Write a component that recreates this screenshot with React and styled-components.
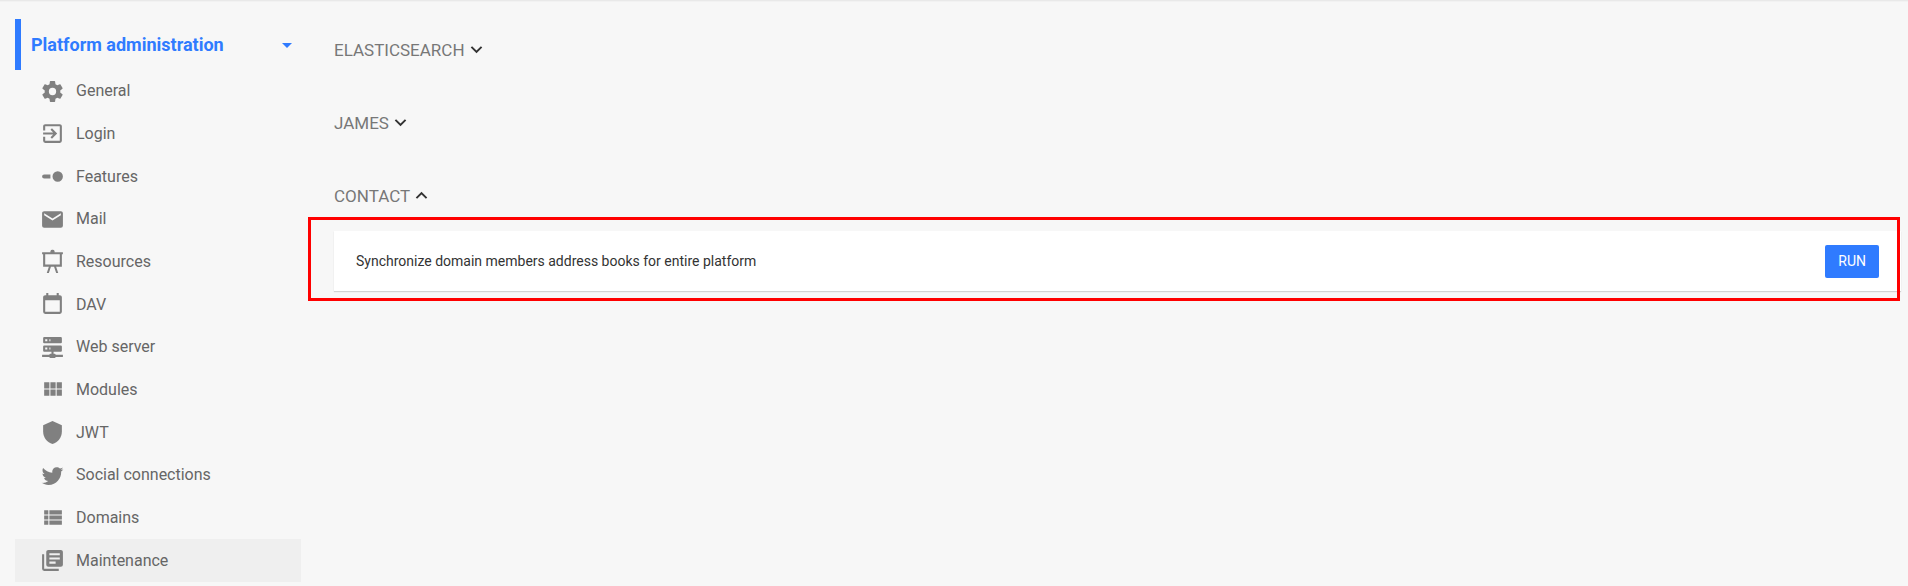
import React, { useState } from "react";
import styled, { createGlobalStyle } from "styled-components";

const GlobalStyle = createGlobalStyle`
  *, *::before, *::after { box-sizing: border-box; }
  body {
    margin: 0;
    background: #f7f7f7;
    color: #333333;
    font-family: Roboto, "Liberation Sans", sans-serif;
    font-size: 16px;
  }
`;

const Page = styled.div`
  display: flex;
  align-items: flex-start;
  border-top: 1px solid #e9e9e9;
  box-shadow: inset 0 1px 0 #f2f2f2;
`;

const Sidebar = styled.nav`
  flex: 0 0 286px;
  margin: 18px 0 0 15px;
`;

const SidebarHeader = styled.button`
  display: flex;
  align-items: center;
  justify-content: space-between;
  width: 100%;
  height: 51px;
  padding: 0 2px 0 10px;
  border: 0;
  border-left: 6px solid #2f7bff;
  background: transparent;
  color: #2f7bff;
  font: inherit;
  font-size: 18px;
  font-weight: 700;
  text-align: left;
  cursor: pointer;
`;

const Menu = styled.ul`
  display: grid;
  grid-auto-rows: 1fr;
  min-height: 512px;
  margin: 0;
  padding: 0;
  list-style: none;
`;

const MenuItem = styled.li`
  display: flex;
`;

const MenuLink = styled.a`
  flex: 1;
  display: flex;
  align-items: center;
  gap: 11px;
  padding-left: 25px;
  background: ${(p) => (p.$active ? "#efefef" : "transparent")};
  color: #666666;
  line-height: 20px;
  text-decoration: none;
`;

const Glyph = styled.svg`
  flex: none;
  width: ${(p) => p.$size}px;
  height: ${(p) => p.$size}px;
  fill: currentColor;
`;

const MenuGlyph = styled(Glyph)`
  color: #808080;
`;

const Main = styled.main`
  flex: 1;
  min-width: 0;
  display: flex;
  flex-direction: column;
  gap: 50px;
  padding: 37px 7px 0 33px;
`;

const SectionTitle = styled.h2`
  margin: 0;
  font-size: 17px;
  font-weight: 400;
`;

const SectionToggle = styled.button`
  display: flex;
  align-items: center;
  padding: 0;
  border: 0;
  background: transparent;
  color: #777777;
  font: inherit;
  line-height: 22px;
  text-transform: uppercase;
  cursor: pointer;
`;

const Chevron = styled(Glyph)`
  color: #333333;
`;

const SectionBody = styled.div`
  position: relative;
  margin-top: 24px;
`;

const Highlight = styled.div`
  position: absolute;
  inset: -14px 1px -10px -26px;
  border: 3px solid #ff0000;
  pointer-events: none;
`;

const Card = styled.div`
  display: flex;
  align-items: center;
  justify-content: space-between;
  min-height: 60px;
  padding: 0 22px;
  background: #ffffff;
  box-shadow: 0 1px 1px rgba(0, 0, 0, 0.15);
  font-size: 14px;
`;

const RunButton = styled.button`
  height: 33px;
  padding: 0 13px;
  border: 0;
  border-radius: 2px;
  background: #2f7bff;
  color: #ffffff;
  font: inherit;
  cursor: pointer;
`;

const icons = {
  cog: "M12,15.5A3.5,3.5 0 0,1 8.5,12A3.5,3.5 0 0,1 12,8.5A3.5,3.5 0 0,1 15.5,12A3.5,3.5 0 0,1 12,15.5M19.43,12.97C19.47,12.65 19.5,12.33 19.5,12C19.5,11.67 19.47,11.34 19.43,11L21.54,9.37C21.73,9.22 21.78,8.95 21.66,8.73L19.66,5.27C19.54,5.05 19.27,4.96 19.05,5.05L16.56,6.05C16.04,5.66 15.5,5.32 14.87,5.07L14.5,2.42C14.46,2.18 14.25,2 14,2H10C9.75,2 9.54,2.18 9.5,2.42L9.13,5.07C8.5,5.32 7.96,5.66 7.44,6.05L4.95,5.05C4.73,4.96 4.46,5.05 4.34,5.27L2.34,8.73C2.21,8.95 2.27,9.22 2.46,9.37L4.57,11C4.53,11.34 4.5,11.67 4.5,12C4.5,12.33 4.53,12.65 4.57,12.97L2.46,14.63C2.27,14.78 2.21,15.05 2.34,15.27L4.34,18.73C4.46,18.95 4.73,19.03 4.95,18.95L7.44,17.94C7.96,18.34 8.5,18.68 9.13,18.93L9.5,21.58C9.54,21.82 9.75,22 10,22H14C14.25,22 14.46,21.82 14.5,21.58L14.87,18.93C15.5,18.67 16.04,18.34 16.56,17.94L19.05,18.95C19.27,19.03 19.54,18.95 19.66,18.73L21.66,15.27C21.78,15.05 21.73,14.78 21.54,14.63L19.43,12.97Z",
  enter: "M19,3H5C3.89,3 3,3.89 3,5V9H5V5H19V19H5V15H3V19A2,2 0 0,0 5,21H19A2,2 0 0,0 21,19V5C21,3.89 20.1,3 19,3M10.08,15.58L11.5,17L16.5,12L11.5,7L10.08,8.41L12.67,11H3V13H12.67L10.08,15.58Z",
  features: "M4,10A2,2 0 0,0 2,12A2,2 0 0,0 4,14H10V10H4M17,7A5,5 0 0,0 12,12A5,5 0 0,0 17,17A5,5 0 0,0 22,12A5,5 0 0,0 17,7Z",
  mail: "M20,8L12,13L4,8V6L12,11L20,6M20,4H4C2.89,4 2,4.89 2,6V18A2,2 0 0,0 4,20H20A2,2 0 0,0 22,18V6C22,4.89 21.1,4 20,4Z",
  easel: "M10,2A2,2 0 0,1 12,0.8A2,2 0 0,1 14,2L14,3H22V5H21V17H15.5L17.5,23H15.5L13.5,17H10.5L8.5,23H6.5L8.5,17H3V5H2V3H10M5,5V15H19V5H5Z",
  calendar: "M19,19H5V8H19M16,1V3H8V1H6V3H5C3.89,3 3,3.89 3,5V19A2,2 0 0,0 5,21H19A2,2 0 0,0 21,19V5C21,3.89 20.1,3 19,3H18V1",
  server: "M13,18H14A1,1 0 0,1 15,19H22V21H15A1,1 0 0,1 14,22H10A1,1 0 0,1 9,21H2V19H9A1,1 0 0,1 10,18H11V16H4A1,1 0 0,1 3,15V11A1,1 0 0,1 4,10H20A1,1 0 0,1 21,11V15A1,1 0 0,1 20,16H13V18M4,2H20A1,1 0 0,1 21,3V7A1,1 0 0,1 20,8H4A1,1 0 0,1 3,7V3A1,1 0 0,1 4,2M9,6H10V4H9V6M9,14H10V12H9V14M5,4V6H7V4H5M5,12V14H7V12H5Z",
  modules: "M16,5V11H21V5M10,11H15V5H10M16,18H21V12H16M10,18H15V12H10M4,18H9V12H4M4,11H9V5H4V11Z",
  shield: "M12,1L3,5V11C3,16.55 6.84,21.74 12,23C17.16,21.74 21,16.55 21,11V5L12,1Z",
  bird: "M22.46,6C21.69,6.35 20.86,6.58 20,6.69C20.88,6.16 21.56,5.32 21.88,4.31C21.05,4.81 20.13,5.16 19.16,5.36C18.37,4.5 17.26,4 16,4C13.65,4 11.73,5.92 11.73,8.29C11.73,8.63 11.77,8.96 11.84,9.27C8.28,9.09 5.11,7.38 3,4.79C2.63,5.42 2.42,6.16 2.42,6.94C2.42,8.43 3.17,9.75 4.33,10.5C3.62,10.5 2.96,10.3 2.38,10C2.38,10 2.38,10 2.38,10.03C2.38,12.11 3.86,13.85 5.82,14.24C5.46,14.34 5.08,14.39 4.69,14.39C4.42,14.39 4.15,14.36 3.89,14.31C4.43,16 6,17.26 7.89,17.29C6.43,18.45 4.58,19.13 2.56,19.13C2.22,19.13 1.88,19.11 1.54,19.07C3.44,20.29 5.7,21 8.12,21C16,21 20.33,14.46 20.33,8.79C20.33,8.6 20.33,8.42 20.32,8.23C21.16,7.63 21.88,6.87 22.46,6Z",
  list: "M9,5V9H21V5M9,19H21V15H9M9,14H21V10H9M4,9H8V5H4M4,19H8V15H4M4,14H8V10H4V14Z",
  library: "M19,7H9V5H19M15,15H9V13H15M19,11H9V9H19M20,2H8C6.89,2 6,2.89 6,4V16A2,2 0 0,0 8,18H20A2,2 0 0,0 22,16V4C22,2.89 21.1,2 20,2M4,6H2V20A2,2 0 0,0 4,22H18V20H4V6Z",
  menuDown: "M7,10L12,15L17,10H7Z",
  chevronDown: "M7.41,8.58L12,13.17L16.59,8.58L18,10L12,16L6,10L7.41,8.58Z",
  chevronUp: "M7.41,15.41L12,10.83L16.59,15.41L18,14L12,8L6,14L7.41,15.41Z",
};

function Icon({ as: Shape = Glyph, name, size }) {
  return (
    <Shape $size={size} viewBox="0 0 24 24" aria-hidden="true">
      <path d={icons[name]} />
    </Shape>
  );
}

const menu = [
  ["General", "cog"],
  ["Login", "enter"],
  ["Features", "features"],
  ["Mail", "mail"],
  ["Resources", "easel"],
  ["DAV", "calendar"],
  ["Web server", "server"],
  ["Modules", "modules"],
  ["JWT", "shield"],
  ["Social connections", "bird"],
  ["Domains", "list"],
  ["Maintenance", "library"],
];

function Section({ title, initiallyOpen = false, children }) {
  const [open, setOpen] = useState(initiallyOpen);
  return (
    <section>
      <SectionTitle>
        <SectionToggle type="button" aria-expanded={open} onClick={() => setOpen(!open)}>
          {title}
          <Icon as={Chevron} name={open ? "chevronUp" : "chevronDown"} size={23} />
        </SectionToggle>
      </SectionTitle>
      {open && children}
    </section>
  );
}

export default function App() {
  return (
    <>
      <GlobalStyle />
      <Page>
        <Sidebar aria-label="Administration">
          <SidebarHeader type="button">
            Platform administration
            <Icon name="menuDown" size={24} />
          </SidebarHeader>
          <Menu>
            {menu.map(([label, icon]) => {
              const active = label === "Maintenance";
              return (
                <MenuItem key={label}>
                  <MenuLink href="#" $active={active} aria-current={active ? "page" : undefined}>
                    <Icon as={MenuGlyph} name={icon} size={25} />
                    {label}
                  </MenuLink>
                </MenuItem>
              );
            })}
          </Menu>
        </Sidebar>
        <Main>
          <Section title="Elasticsearch" />
          <Section title="James" />
          <Section title="Contact" initiallyOpen>
            <SectionBody>
              <Card>
                <span>Synchronize domain members address books for entire platform</span>
                <RunButton type="button">RUN</RunButton>
              </Card>
              <Highlight />
            </SectionBody>
          </Section>
        </Main>
      </Page>
    </>
  );
}
